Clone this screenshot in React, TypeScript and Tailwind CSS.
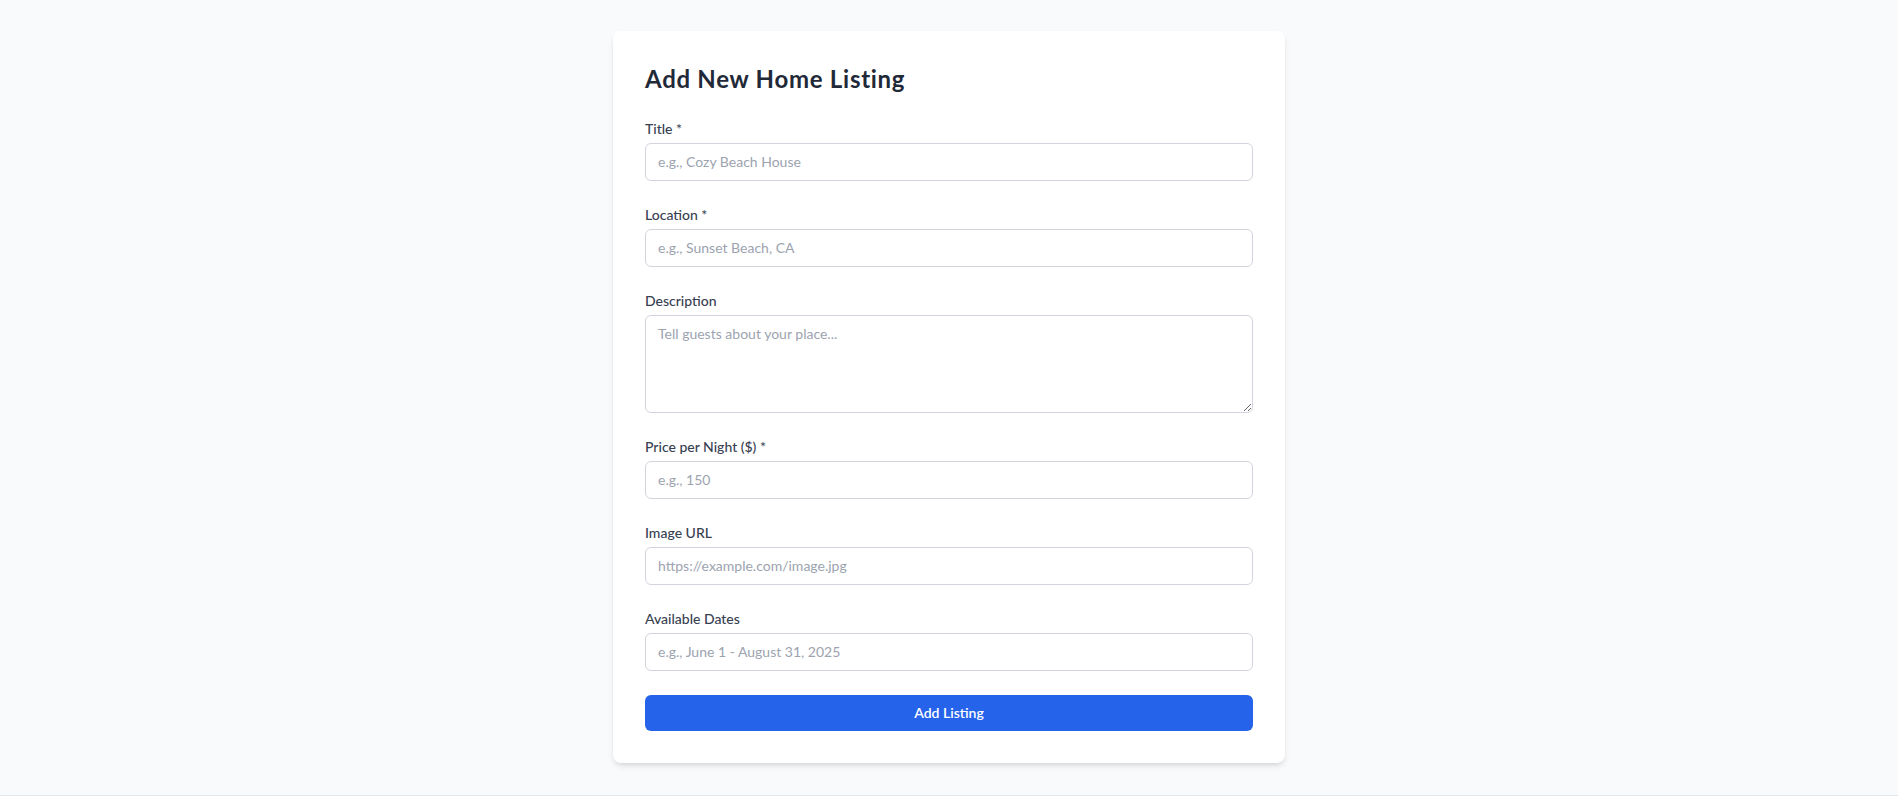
import React, { useState } from 'react';

const font = { fontFamily: 'Lato, "Noto Sans", sans-serif' };

interface FieldProps {
  label: string;
  name: string;
  placeholder: string;
  value: string;
  onChange: (name: string, value: string) => void;
  multiline?: boolean;
}

const Field: React.FC<FieldProps> = ({ label, name, placeholder, value, onChange, multiline }) => {
  const inputClass =
    'block w-full rounded-md border border-[#d1d5db] bg-white px-3 py-2 text-sm leading-5 text-[#111827] placeholder:text-[#9ca3af] focus:outline-none focus:ring-2 focus:ring-[#3b82f6]';
  return (
    <div>
      <label htmlFor={name} className="mb-1 block text-sm leading-5 font-medium text-[#374151]">
        {label}
      </label>
      {multiline ? (
        <textarea
          id={name}
          rows={4}
          placeholder={placeholder}
          value={value}
          onChange={(e) => onChange(name, e.target.value)}
          className={inputClass}
        />
      ) : (
        <input
          id={name}
          type="text"
          placeholder={placeholder}
          value={value}
          onChange={(e) => onChange(name, e.target.value)}
          className={inputClass}
        />
      )}
    </div>
  );
};

export default function App() {
  const [form, setForm] = useState({
    title: '',
    location: '',
    description: '',
    price: '',
    image: '',
    dates: '',
  });

  const update = (name: string, value: string) => setForm((f) => ({ ...f, [name]: value }));

  return (
    <div className="min-h-screen bg-[#f9fafb]" style={font}>
      {/* Header */}
      <header className="h-0 bg-white shadow-sm" />

      {/* Form */}
      <main className="px-4 pt-[31px] pb-8">
        <div className="mx-auto max-w-2xl rounded-lg bg-white p-8 shadow-md">
          <h1 className="mb-6 text-2xl leading-8 font-bold tracking-[0.03em] text-[#1f2937]">Add New Home Listing</h1>
          <form className="space-y-6" onSubmit={(e) => e.preventDefault()}>
            <Field label="Title *" name="title" placeholder="e.g., Cozy Beach House" value={form.title} onChange={update} />
            <Field label="Location *" name="location" placeholder="e.g., Sunset Beach, CA" value={form.location} onChange={update} />
            <Field
              label="Description"
              name="description"
              placeholder="Tell guests about your place..."
              value={form.description}
              onChange={update}
              multiline
            />
            <Field label="Price per Night ($) *" name="price" placeholder="e.g., 150" value={form.price} onChange={update} />
            <Field label="Image URL" name="image" placeholder="https://example.com/image.jpg" value={form.image} onChange={update} />
            <Field
              label="Available Dates"
              name="dates"
              placeholder="e.g., June 1 - August 31, 2025"
              value={form.dates}
              onChange={update}
            />
            <button
              type="submit"
              className="block w-full rounded-md bg-[#2563eb] py-2 text-sm leading-5 font-semibold text-white hover:bg-[#1d4ed8]"
            >
              Add Listing
            </button>
          </form>
        </div>
      </main>

      <footer className="border-t border-[#e5e7eb] bg-white py-4" />
    </div>
  );
}
